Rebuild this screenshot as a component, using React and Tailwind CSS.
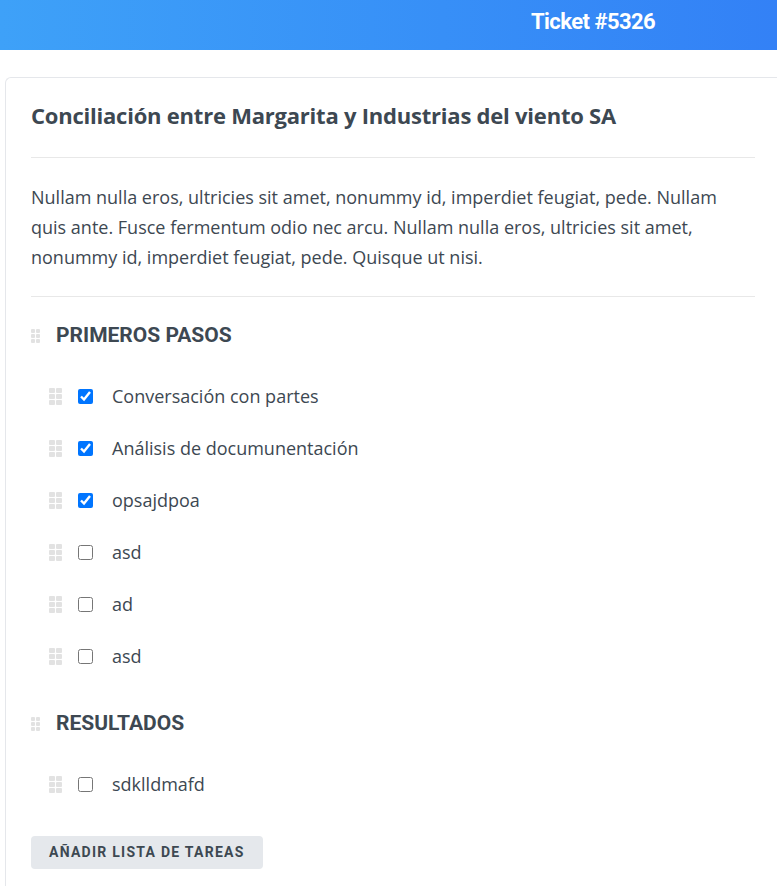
import { useState } from 'react'

const heading = { fontFamily: 'Roboto, "Liberation Sans", sans-serif' }

/* drag handle: 2x3 grid of dots */
function Handle({ small }) {
  return (
    <div className="grid grid-cols-2 gap-[1px]">
      {Array.from({ length: 6 }).map((_, i) => (
        <span
          key={i}
          className={`${small ? 'w-[4px] h-[4px]' : 'w-[6px] h-[5px]'} bg-[#e2e2e2] rounded-[1px]`}
        />
      ))}
    </div>
  )
}

function Task({ label, done }) {
  const [checked, setChecked] = useState(done)
  return (
    <div className="flex items-center h-[52px] pl-[18px]">
      <Handle />
      <input
        type="checkbox"
        checked={checked}
        onChange={() => setChecked(!checked)}
        className="ml-[16px] w-[15px] h-[15px] accent-[#0075ff]"
      />
      <span className="ml-[19px] text-[18px] text-[#3d4852]">{label}</span>
    </div>
  )
}

function Section({ title, tasks }) {
  return (
    <div>
      <div className="flex items-center h-[36px]">
        <Handle small />
        <h3 style={heading} className="ml-[16px] text-[21px] font-bold text-[#3d4852]">
          {title}
        </h3>
      </div>
      <div className="mt-[16px]">
        {tasks.map((t) => (
          <Task key={t.label} {...t} />
        ))}
      </div>
    </div>
  )
}

export default function App() {
  return (
    <div className="min-h-screen bg-white" style={{ fontFamily: '"Open Sans", sans-serif' }}>
      {/* HEADER */}
      <div className="h-[50px] bg-gradient-to-r from-[#3ea1f8] to-[#3381f6] flex items-center pb-[8px]">
        <h1 style={heading} className="ml-[531px] text-[22px] font-bold text-white tracking-tight">
          Ticket #5326
        </h1>
      </div>

      {/* CARD */}
      <div className="mt-[27px] ml-[5px] border-t border-l border-[#e5e7eb] rounded-tl-[6px] pl-[25px] pr-[22px] pb-[17px]">
        <h2 className="pt-[23px] text-[22px] font-bold text-[#3d4852] leading-[28px] tracking-[-0.01em]">
          Conciliación entre Margarita y Industrias del viento SA
        </h2>
        <div className="mt-[28px] border-t border-[#e8e8e8]" />

        <p className="mt-[24px] text-[18px] leading-[30px] text-[#3d4852]">
          Nullam nulla eros, ultricies sit amet, nonummy id, imperdiet feugiat, pede. Nullam quis ante. Fusce
          fermentum odio nec arcu. Nullam nulla eros, ultricies sit amet, nonummy id, imperdiet feugiat, pede.
          Quisque ut nisi.
        </p>
        <div className="mt-[24px] border-t border-[#e8e8e8]" />

        <div className="mt-[21px]">
          <Section
            title="PRIMEROS PASOS"
            tasks={[
              { label: 'Conversación con partes', done: true },
              { label: 'Análisis de documunentación', done: true },
              { label: 'opsajdpoa', done: true },
              { label: 'asd', done: false },
              { label: 'ad', done: false },
              { label: 'asd', done: false },
            ]}
          />
          <div className="mt-[24px]">
            <Section title="RESULTADOS" tasks={[{ label: 'sdklldmafd', done: false }]} />
          </div>
        </div>

        <button
          style={heading}
          className="mt-[26px] h-[33px] px-[18px] rounded-[4px] bg-[#e5e8ec] text-[14px] font-bold tracking-[0.09em] text-[#3d4852]"
        >
          AÑADIR LISTA DE TAREAS
        </button>
      </div>
    </div>
  )
}
